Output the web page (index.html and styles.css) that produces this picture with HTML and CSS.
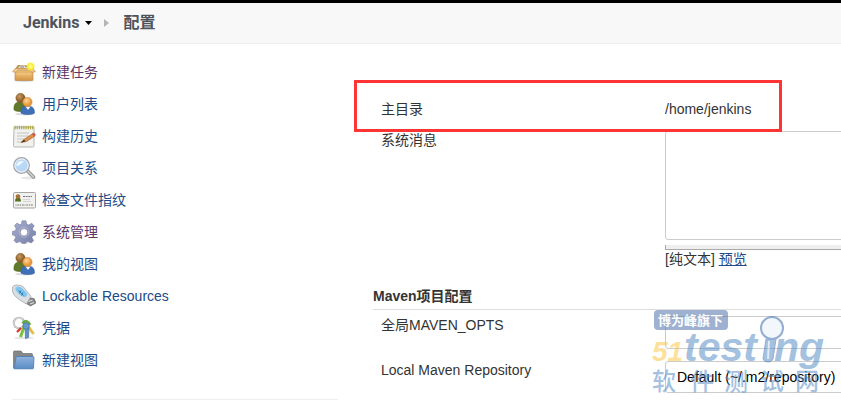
FILE: index.html
```html
<!DOCTYPE html>
<html lang="zh-CN">
<head>
  <meta charset="UTF-8" />
  <meta name="viewport" content="width=device-width, initial-scale=1.0"/>
  <title>配置 [Jenkins]</title>
  <link rel="stylesheet" href="styles.css">
</head>
<body>

  <!-- shared icon shapes -->
  <svg class="defs" aria-hidden="true">
    <defs>
      <linearGradient id="blue" x1="0" y1="0" x2="0" y2="1">
        <stop offset="0" stop-color="#8fb3dc"/><stop offset="1" stop-color="#5c8cc6"/>
      </linearGradient>
      <linearGradient id="box" x1="0" y1="0" x2="0" y2="1">
        <stop offset="0" stop-color="#e3b878"/><stop offset="0.5" stop-color="#e9b566"/><stop offset="1" stop-color="#cf9548"/>
      </linearGradient>
      <linearGradient id="gear" x1="0" y1="0" x2="1" y2="1">
        <stop offset="0" stop-color="#a9b0cd"/><stop offset="1" stop-color="#7580a8"/>
      </linearGradient>
      <radialGradient id="glow">
        <stop offset="0" stop-color="#ffffb0"/><stop offset="0.6" stop-color="#fbec2c"/><stop offset="1" stop-color="#fbec2c" stop-opacity="0"/>
      </radialGradient>
      <radialGradient id="brown" cx="0.4" cy="0.35">
        <stop offset="0" stop-color="#c89a62"/><stop offset="1" stop-color="#8f5e28"/>
      </radialGradient>
      <radialGradient id="orange" cx="0.4" cy="0.35">
        <stop offset="0" stop-color="#ffd9a0"/><stop offset="1" stop-color="#e8953a"/>
      </radialGradient>
    </defs>
    <symbol id="users" viewBox="0 0 24 24">
      <ellipse cx="13" cy="22" rx="10" ry="1.500" fill="#ddd"/>
      <path d="M2 18c-.5-5 1-8 5.500-8s6.500 3 6.500 8c-3 2-9 2-12 0z" fill="#5f7a2c" stroke="#4a6118" stroke-width=".5"/>
      <circle cx="8.500" cy="6" r="4.700" fill="url(#brown)" stroke="#80541f" stroke-width=".4"/>
      <path d="M9 21c-.5-5 1.500-7 6.500-7s7 2 7 7c-3 2-10.500 2-13.500 0z" fill="#3d70b8" stroke="#2a5799" stroke-width=".5"/>
      <path d="M13.500 14.500l2.500 3.500 2.500-3.500z" fill="#fff"/>
      <circle cx="15.500" cy="10" r="4.700" fill="url(#orange)" stroke="#cf8432" stroke-width=".4"/>
    </symbol>
  </svg>

  <header class="header">
    <nav class="breadcrumbs">
      <a class="home" href="#">Jenkins</a>
      <svg class="caret" viewBox="0 0 7 4"><path d="M0 0h7L3.500 4z" fill="#000"/></svg>
      <svg class="separator" viewBox="0 0 5 8"><path d="M0 0l5 4-5 4z" fill="#b5b5b5"/></svg>
      <a class="current" href="#">配置</a>
    </nav>
  </header>

  <div class="page">
    <aside class="side-panel">
      <ul class="tasks">
        <li><a class="task visited" href="#">
          <svg class="icon" viewBox="0 0 24 24">
            <ellipse cx="12" cy="20.500" rx="10" ry="1.500" fill="#ddd"/>
            <path d="M3 9l3-4h13l3 4z" fill="#b98b4a"/>
            <path d="M6 8l2-2.500h9L19 8z" fill="#e2dfd6"/>
            <path d="M8 7h4M13 6.500h3" stroke="#8d8a80"/>
            <path d="M3 9h18v10.500q0 1-1 1H4q-1 0-1-1z" fill="url(#box)" stroke="#b8843e" stroke-width=".6"/>
            <path d="M3 8.500h18l2.500 3.500h-4L18 10H6l-2 2H.5z" fill="#efca90" stroke="#c49450" stroke-width=".6"/>
            <path d="M5 14h14" stroke="#f0cb90"/>
            <circle cx="18.500" cy="6.500" r="4.800" fill="url(#glow)"/>
          </svg>
          <span>新建任务</span></a></li>
        <li><a class="task" href="#"><svg class="icon"><use href="#users"/></svg><span>用户列表</span></a></li>
        <li><a class="task" href="#">
          <svg class="icon" viewBox="0 0 24 24">
            <path d="M2 3h20v18.500q0 1.500-1.500 1.500h-18Q1.500 23 1.500 21.500z" fill="#f1f1ef" stroke="#a3a39e" stroke-width=".8"/>
            <path d="M2.500 3.500h19" stroke="#b0a840" stroke-width="3.500" stroke-dasharray="1.200 1"/>
            <path d="M5 9h12M5 12h12M5 15h10M5 18h5" stroke="#c4c4c0"/>
            <path d="M9 18.500l3.500-3.500L21 9.500l2 2.500-8.500 5.500z" fill="#dc9048" stroke="#a0602c" stroke-width=".6"/>
            <path d="M9 18.500l3-3 1.500 2z" fill="#4a3320"/>
            <path d="M20 10l2-1.500 2 2.500-2 1.500z" fill="#cf5a58"/>
          </svg>
          <span>构建历史</span></a></li>
        <li><a class="task" href="#">
          <svg class="icon" viewBox="0 0 24 24">
            <ellipse cx="16" cy="22" rx="7" ry="1.500" fill="#e8e8e8"/>
            <path d="M15.500 15l6 6" stroke="#8c8c8a" stroke-width="3.600" stroke-linecap="round"/>
            <path d="M15.500 15l6 6" stroke="#c8c8c6" stroke-width="1.800" stroke-linecap="round"/>
            <circle cx="9.500" cy="9.500" r="7.800" fill="#b9d8f6" stroke="#a2a5a8" stroke-width="1.200"/>
            <circle cx="9.500" cy="9.500" r="6.600" fill="none" stroke="#f4f4f4"/>
            <path d="M4.500 10c0-4 4-6 7.500-4.500C9.500 7 8 10 4.500 10z" fill="#f1f8ff"/>
          </svg>
          <span>项目关系</span></a></li>
        <li><a class="task" href="#">
          <svg class="icon" viewBox="0 0 24 24">
            <rect x="1.500" y="4.500" width="22" height="15.500" rx="1" fill="#f1f2ef" stroke="#a4a6a1"/>
            <path d="M3 13.500q0-4 3-4t3 4z" fill="#56711f"/>
            <circle cx="6" cy="8.500" r="2.300" fill="#a77139"/>
            <path d="M11 8.500h9" stroke="#777" stroke-dasharray="2 .6"/>
            <path d="M11 11.500h7M11 13.500h8" stroke="#d5d5d5"/>
            <path d="M3.500 17h18" stroke="#777774" stroke-dasharray="1 .8 2 .7"/>
          </svg>
          <span>检查文件指纹</span></a></li>
        <li><a class="task visited" href="#">
          <svg class="icon" viewBox="0 0 24 24">
            <ellipse cx="13" cy="22" rx="8" ry="1.500" fill="#ddd"/>
            <path fill-rule="evenodd" d="M10 .8h4l.7 3.300 2 .9 3-1.800 2.500 2.500-1.700 3 .9 2 2.300.7v3.500l-3 .8-.8 2 1.800 2.800-2.500 2.500-3-1.700-2 .8-.7 1.500h-3.400l-.8-1.500-2-.8-2.800 1.700-2.500-2.500 1.700-2.900-.9-2-2.500-.7v-3.500l3-.7.8-2L2.500 5.500 5 3l3 1.800 1.400-.7zM12 8.600a3.700 3.700 0 1 0 .01 0z" fill="url(#gear)" stroke="#6c769e" stroke-width=".5"/>
            <circle cx="12" cy="12.300" r="5" fill="none" stroke="#b9bfd8" stroke-width=".7"/>
          </svg>
          <span>系统管理</span></a></li>
        <li><a class="task" href="#"><svg class="icon"><use href="#users"/></svg><span>我的视图</span></a></li>
        <li><a class="task" href="#">
          <svg class="icon" viewBox="0 0 24 24">
            <path d="M15.500 13.500l6.500 1 2 4.500-5.500 3-5-3z" fill="#858683" stroke="#5c5d5b" stroke-width=".6"/>
            <path d="M16.500 17.500l4-1.500M18 20l4-1.500" stroke="#ddd" stroke-width="1.200"/>
            <path d="M.5 4Q.7 1 5 1q4 0 6.500 2l7.500 9.500-4.500 7.500Q6.500 16 2.500 11.500-.3 8 .5 4z" fill="#dcdfe1" stroke="#9a9ea1" stroke-width=".7"/>
            <path d="M3 4q3-3 7 0l5 5.500q.5 4-3.500 3.500Q5 10 3 4z" fill="#7cc6f0"/>
            <path d="M6.500 6.500l5 5M9 6.500l-1.500 3M11 8.500l-1.500 3" stroke="#2f78b0" stroke-width=".9"/>
          </svg>
          <span>Lockable Resources</span></a></li>
        <li><a class="task" href="#">
          <svg class="icon" viewBox="0 0 24 24">
            <ellipse cx="12" cy="22" rx="10" ry="1.300" fill="#e7e7e7"/>
            <circle cx="7" cy="7" r="5.300" fill="none" stroke="#a5a5a5" stroke-width="1.800"/>
            <circle cx="7" cy="7" r="5.300" fill="none" stroke="#eee" stroke-width=".8"/>
            <path d="M9 12l-4 4" stroke="#d8392c" stroke-width="2.400"/>
            <path d="M12 11l-3.500 10" stroke="#78c23c" stroke-width="3"/>
            <path d="M16 10l5.500 8" stroke="#dfc04c" stroke-width="3"/>
            <path d="M10.500 7.500q4-5 7.500 1.500" fill="none" stroke="#62ac42" stroke-width="3"/>
            <path d="M13 10.500l.5 12 3-1 .5-10z" fill="#5f91c8" stroke="#4873a6" stroke-width=".7"/>
            <circle cx="14" cy="10" r="3.200" fill="#6799d0" stroke="#4873a6" stroke-width=".7"/>
          </svg>
          <span>凭据</span></a></li>
        <li><a class="task" href="#">
          <svg class="icon" viewBox="0 0 24 24">
            <path d="M1.500 20V4q0-1 1-1H9l2 2.500h8.500q1 0 1 1V20z" fill="#858789" stroke="#6c6e70" stroke-width=".7"/>
            <path d="M4 9.500q0-1 1-1h16q1 0 1 1L21.500 20q0 .8-1 .8H2z" fill="url(#blue)" stroke="#4a7ab5" stroke-width=".8"/>
          </svg>
          <span>新建视图</span></a></li>
      </ul>
    </aside>

    <main class="main-panel">
      <form class="config">
        <div class="row row-home">
          <span>主目录</span>
          <span>/home/jenkins</span>
          <div class="highlight"></div>
        </div>
        <div class="row row-message">
          <label for="message">系统消息</label>
          <div class="field">
            <textarea id="message" name="message"></textarea>
            <div class="handle"></div>
            <div class="preview">[纯文本] <a href="#">预览</a></div>
          </div>
        </div>

        <h2 class="section-header">Maven项目配置</h2>
        <div class="row row-field">
          <label for="opts">全局MAVEN_OPTS</label>
          <input type="text" id="opts" name="opts" />
        </div>
        <div class="row row-field">
          <label for="repo">Local Maven Repository</label>
          <select id="repo" name="repo">
            <option>Default (~/.m2/repository)</option>
          </select>
        </div>
      </form>
    </main>
  </div>

  <svg class="watermark" viewBox="0 0 176 88" aria-hidden="true">
    <rect x="2" y="1" width="74" height="20" rx="4" fill="#5273ab"/>
    <text class="wm-badge" x="6" y="16">博为峰旗下</text>
    <text class="wm-number" x="0" y="52">51</text>
    <text class="wm-name" x="32" y="52">test</text>
    <text class="wm-name" x="122" y="52">ng</text>
    <path d="M114 30h10l-3 20q-1 3-5 3t-5-3z" fill="#5a8fc8" stroke="#3d6cae"/>
    <path d="M117 32l-1 18" stroke="#c8dcf2" stroke-width="2"/>
    <circle cx="120" cy="19" r="11" fill="#e8f1fb" stroke="#3d6cae" stroke-width="2"/>
    <text class="wm-site" y="81"><tspan x="0">软</tspan><tspan x="38">件</tspan><tspan x="72">测</tspan><tspan x="108">试</tspan><tspan x="143">网</tspan></text>
  </svg>

</body>
</html>
```
FILE: styles.css
```css
* {
  box-sizing: border-box;
}

body {
  margin: 0;
  position: relative;
  overflow: hidden;
  background-color: #fff;
  color: #333;
  font-family: "Liberation Sans", "Noto Sans CJK SC", sans-serif;
  font-size: 14px;
  line-height: 20px;
}

.defs {
  position: absolute;
  width: 0;
  height: 0;
}

.header {
  border-top: 3px solid #000;
  border-bottom: 1px solid #eee;
  background-color: #f8f8f8;
}

.breadcrumbs {
  display: flex;
  align-items: center;
  height: 40px;
  padding-left: 23px;
  font-family: Roboto, "Noto Sans CJK SC", sans-serif;
  font-size: 16px;
  font-weight: bold;
}

.breadcrumbs a {
  color: #4d545d;
  text-decoration: none;
}

.caret {
  width: 7px;
  height: 4px;
  margin: 0 12px 0 5px;
}

.separator {
  width: 5px;
  height: 8px;
  margin-right: 15px;
}

.page {
  display: flex;
}

.side-panel {
  flex: 0 0 338px;
  padding: 12px 0 0 12px;
}

.tasks {
  margin: 0;
  padding: 0 0 23px;
  list-style: none;
  border-bottom: 1px solid #eee;
}

.task {
  display: flex;
  align-items: center;
  gap: 6px;
  height: 32px;
  color: #204a87;
  text-decoration: none;
}

.task.visited {
  color: #5c3566;
}

.icon {
  width: 24px;
  height: 24px;
}

/* the form is wider than the window and runs off its right edge */
.main-panel {
  flex: 1;
  min-width: 0;
  margin-right: -24px;
  padding: 55px 0 0 35px;
}

.row {
  display: grid;
  grid-template-columns: 284px 1fr;
  align-items: start;
  padding-left: 8px;
}

.row-home {
  position: relative;
  padding-bottom: 12px;
}

.highlight {
  position: absolute;
  top: -19px;
  bottom: -1px;
  left: -19px;
  right: 83px;
  border: 3px solid #ff3535;
}

.row-message {
  margin-bottom: 18px;
}

.row label {
  line-height: 18px;
}

textarea,
input,
select {
  display: block;
  width: 100%;
  border: 1px solid #ccc;
  border-radius: 3px;
  background-color: #fff;
  font-family: inherit;
  font-size: 14px;
}

textarea {
  height: 109px;
  resize: none;
}

.handle {
  height: 5px;
  margin-top: 5px;
  border-left: 1px solid #aaa;
  border-bottom: 1px solid #aaa;
  background-color: #eee;
}

.preview {
  line-height: 18px;
}

.preview a {
  color: #204a87;
}

.section-header {
  margin: 0 0 6px;
  padding-bottom: 3px;
  border-bottom: 1px solid #ddd;
  font-size: 14px;
  line-height: 20px;
}

.row-field {
  margin-bottom: 12px;
}

input,
select {
  height: 33px;
  padding: 0 11px;
}

select {
  height: 32px;
  appearance: none;
  color: #000;
}

.watermark {
  position: absolute;
  top: 309px;
  right: 13px;
  width: 176px;
  height: 88px;
  opacity: 0.55;
  pointer-events: none;
}

.wm-badge {
  fill: #fff;
  font-size: 13px;
  font-weight: bold;
}

.wm-number,
.wm-name {
  font-weight: bold;
  font-style: italic;
}

.wm-number {
  fill: #fcc84c;
  font-size: 28px;
}

.wm-name {
  fill: #5a8fc8;
  font-size: 41px;
}

.wm-site {
  fill: #5a8fc8;
  font-size: 24px;
  font-weight: 500;
}
```
